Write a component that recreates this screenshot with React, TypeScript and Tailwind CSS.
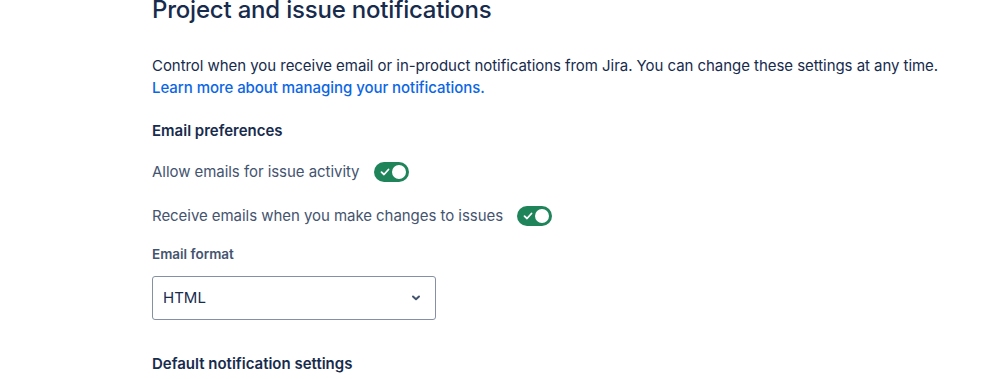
import React, { useState } from 'react';

const Toggle: React.FC<{ checked: boolean; onChange: () => void }> = ({ checked, onChange }) => (
  <button
    onClick={onChange}
    className={`relative w-[35px] h-[20px] rounded-full ${checked ? 'bg-[#1F845A]' : 'bg-[#8590A2]'}`}
  >
    {checked && (
      <svg className="absolute left-[6px] top-[5px] w-[10px] h-[10px]" viewBox="0 0 10 10" fill="none">
        <path d="M1.5 5.2 L4 7.5 L8.5 2.5" stroke="white" strokeWidth="1.8" strokeLinecap="round" strokeLinejoin="round" />
      </svg>
    )}
    <span
      className={`absolute top-[3px] w-[14px] h-[14px] rounded-full bg-white ${checked ? 'left-[18px]' : 'left-[3px]'}`}
    />
  </button>
);

const App: React.FC = () => {
  const [issueActivity, setIssueActivity] = useState(true);
  const [ownChanges, setOwnChanges] = useState(true);

  return (
    <div
      className="w-[999px] h-[379px] overflow-hidden bg-white text-[#172B4D]"
      style={{ fontFamily: 'Inter, "Noto Sans", sans-serif' }}
    >
      <div className="pl-[152px] -mt-[6px]">
        {/* Header */}
        <h1 className="text-[24px] leading-[32px] font-medium tracking-[-0.2px]">Project and issue notifications</h1>

        <p className="mt-[29px] text-[15px] leading-[22px] tracking-[-0.05px]">
          Control when you receive email or in-product notifications from Jira. You can change these settings at any time.
          <br />
          <a href="#" className="text-[#0C66E4] font-medium">Learn more about managing your notifications.</a>
        </p>

        {/* Email preferences */}
        <h2 className="mt-[21px] text-[15px] leading-[22px] font-semibold">Email preferences</h2>

        <div className="mt-[19px] flex items-center gap-[14px]">
          <span className="text-[15px] leading-[22px] text-[#44546F] tracking-[-0.05px]">Allow emails for issue activity</span>
          <Toggle checked={issueActivity} onChange={() => setIssueActivity(!issueActivity)} />
        </div>

        <div className="mt-[22px] flex items-center gap-[14px]">
          <span className="text-[15px] leading-[22px] text-[#44546F] tracking-[-0.05px]">Receive emails when you make changes to issues</span>
          <Toggle checked={ownChanges} onChange={() => setOwnChanges(!ownChanges)} />
        </div>

        <div className="mt-[18px] text-[13.5px] leading-[18px] font-semibold text-[#44546F]">Email format</div>

        <div className="mt-[13px] w-[284px] h-[44px] flex items-center justify-between pl-[10px] pr-[11px] border border-[#8590A2] rounded-[3px]">
          <span className="text-[15px] text-[#172B4D]">HTML</span>
          <svg className="w-[16px] h-[16px]" viewBox="0 0 16 16" fill="none">
            <path d="M5 6.5 L8 9.3 L11 6.5" stroke="#44546F" strokeWidth="2" strokeLinecap="round" strokeLinejoin="round" />
          </svg>
        </div>

        <h2 className="mt-[33px] text-[15px] leading-[22px] font-semibold">Default notification settings</h2>
      </div>
    </div>
  );
};

export default App;
